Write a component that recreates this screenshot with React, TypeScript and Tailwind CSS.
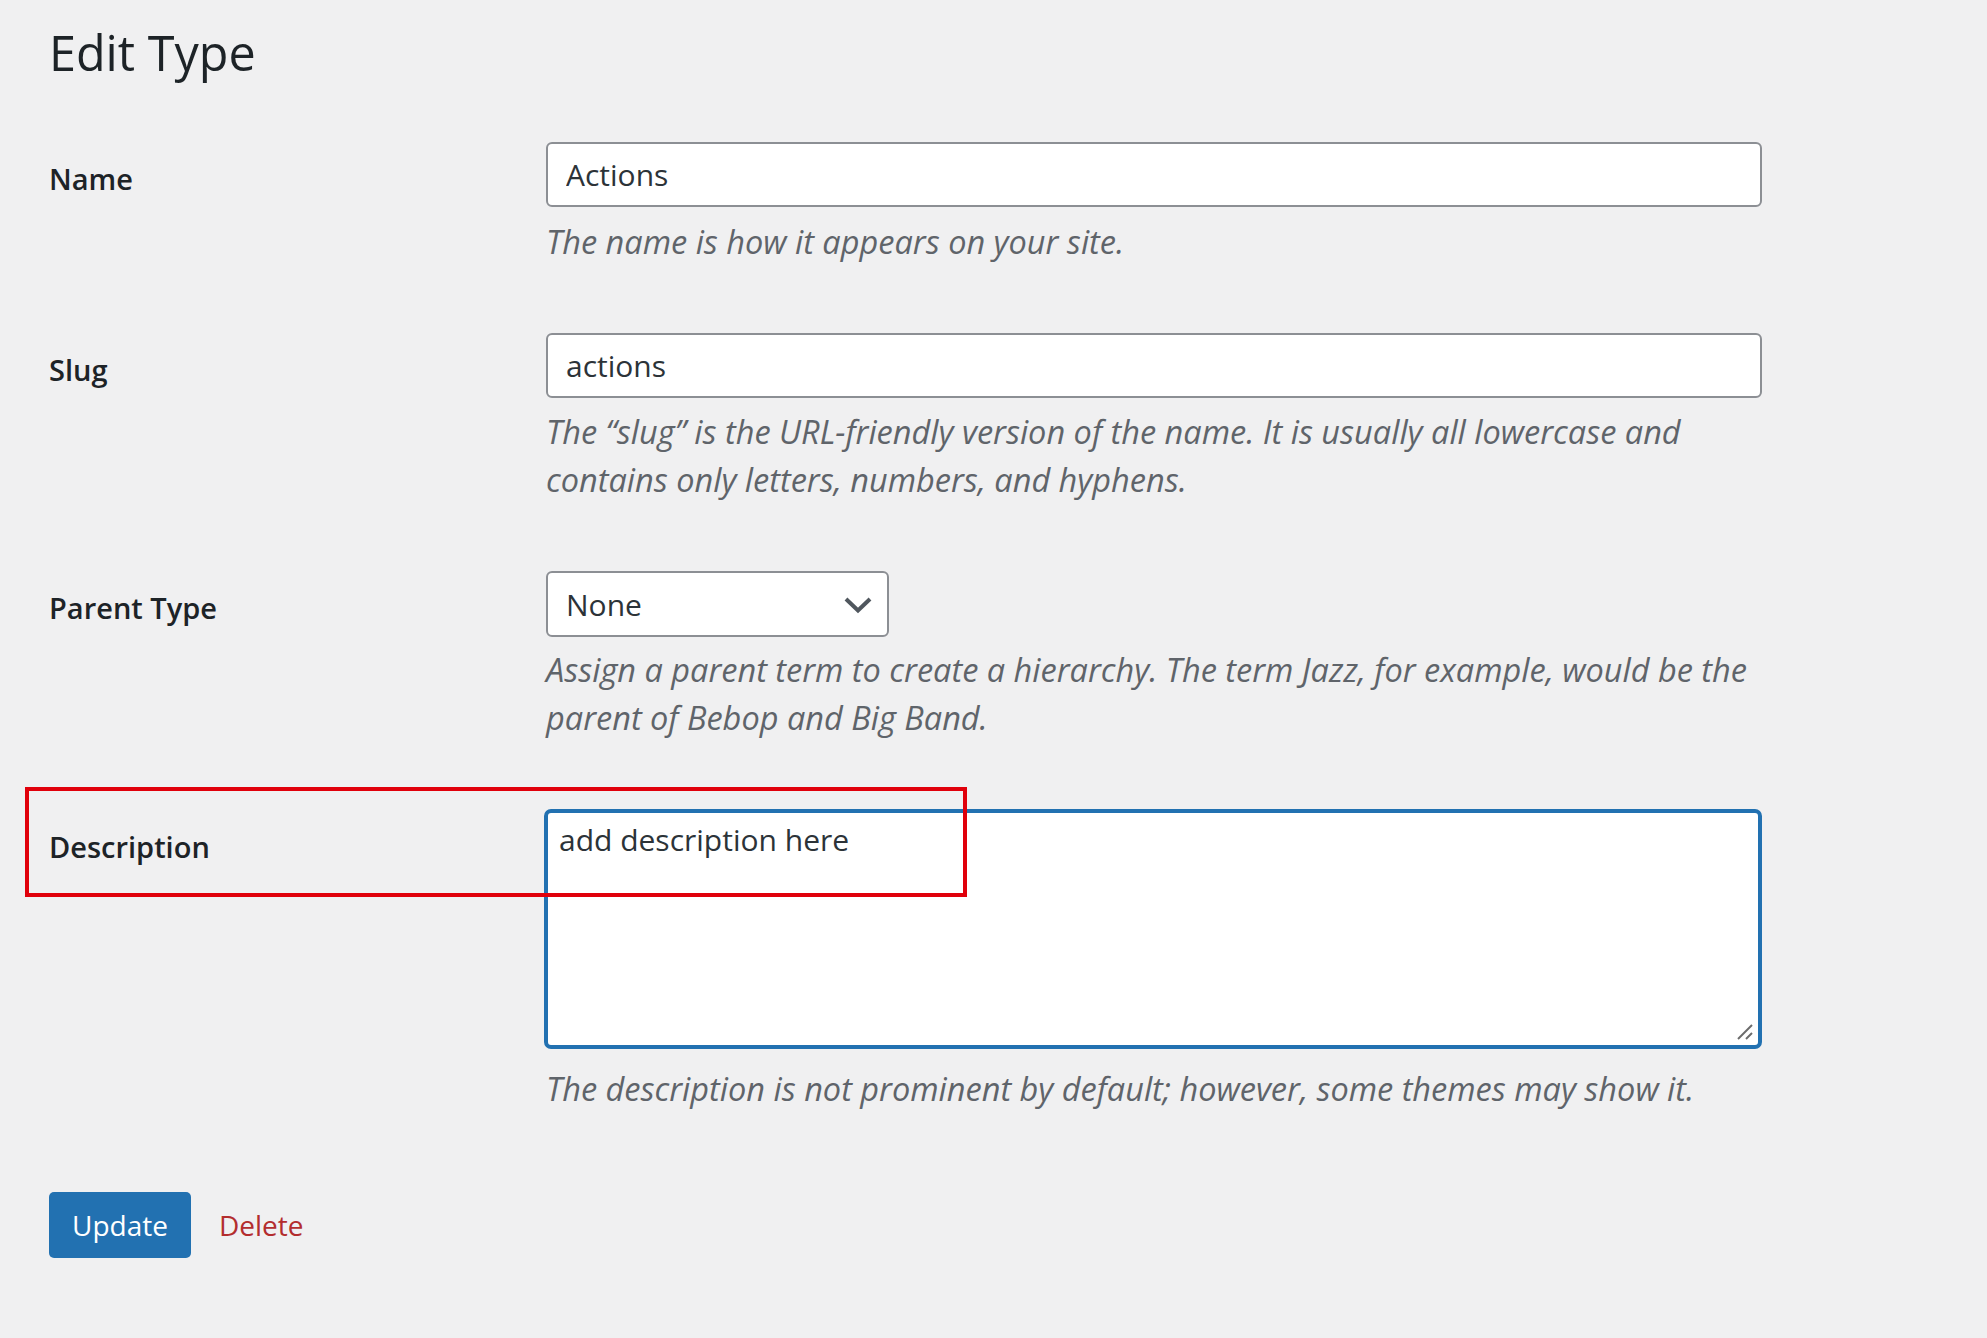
type Row = {
  label: string;
  help: string[];
};

const FONT = "font-['Open_Sans','Noto_Sans',sans-serif]";

function Label({ children }: { children: React.ReactNode }) {
  return (
    <div className="pt-[17px] text-[29px] leading-[40px] font-semibold text-[#1d2327]">
      {children}
    </div>
  );
}

function Help({ lines, className = "mt-[10px]" }: { lines: string[]; className?: string }) {
  return (
    <p className={`${className} text-[32.5px] leading-[48px] italic font-medium text-[#5f646a]`}>
      {lines.map((l, i) => (
        <span key={i}>
          {l}
          {i < lines.length - 1 && <br />}
        </span>
      ))}
    </p>
  );
}

const nameRow: Row = {
  label: "Name",
  help: ["The name is how it appears on your site."],
};

const slugRow: Row = {
  label: "Slug",
  help: [
    "The \u201cslug\u201d is the URL-friendly version of the name. It is usually all lowercase and",
    "contains only letters, numbers, and hyphens.",
  ],
};

const parentRow: Row = {
  label: "Parent Type",
  help: [
    "Assign a parent term to create a hierarchy. The term Jazz, for example, would be the",
    "parent of Bebop and Big Band.",
  ],
};

export default function App() {
  return (
    <div className={`min-h-screen w-full bg-[#f0f0f1] ${FONT} text-[#1d2327]`}>
      <div className="pl-[49px] pt-[20px] pb-[80px]">
        <h1 className="text-[48.5px] leading-[65px] font-normal text-[#1d2327]">Edit Type</h1>

        <div className="mt-[57px] flex flex-col gap-[67px]">
          {/* name */}
          <div className="grid grid-cols-[497px_1216px]">
            <Label>{nameRow.label}</Label>
            <div>
              <input
                defaultValue="Actions"
                className="block h-[65px] w-full rounded-[6px] border-2 border-[#8c8f94] bg-white px-[18px] text-[30px] text-[#2c3338] outline-none"
              />
              <Help lines={nameRow.help} className="mt-[11px]" />
            </div>
          </div>

          {/* slug */}
          <div className="grid grid-cols-[497px_1216px]">
            <Label>{slugRow.label}</Label>
            <div>
              <input
                defaultValue="actions"
                className="block h-[65px] w-full rounded-[6px] border-2 border-[#8c8f94] bg-white px-[18px] text-[30px] text-[#2c3338] outline-none"
              />
              <Help lines={slugRow.help} />
            </div>
          </div>

          {/* parent */}
          <div className="grid grid-cols-[497px_1216px]">
            <Label>{parentRow.label}</Label>
            <div>
              <div className="flex h-[66px] w-[343px] items-center justify-between rounded-[6px] border-2 border-[#8c8f94] bg-white pl-[18px] pr-[15px]">
                <span className="text-[30px] text-[#2c3338]">None</span>
                <svg width="28" height="18" viewBox="0 0 28 18" className="mt-[2px]">
                  <polyline
                    points="2,3 14,14.5 26,3"
                    fill="none"
                    stroke="#50575e"
                    strokeWidth="4"
                  />
                </svg>
              </div>
              <Help lines={parentRow.help} className="mt-[9px]" />
            </div>
          </div>

          {/* description */}
          <div className="relative grid grid-cols-[495px_1218px]">
            <Label>
              <span className="block pt-[1px]">Description</span>
            </Label>
            <div>
              <div className="relative">
                <textarea
                  defaultValue="add description here"
                  className="block h-[240px] w-full resize-none rounded-[7px] border-4 border-[#2271b1] bg-white px-[11px] pt-[7px] text-[30px] leading-[40px] text-[#2c3338] outline-none"
                />
                <svg
                  width="20"
                  height="20"
                  viewBox="0 0 20 20"
                  className="pointer-events-none absolute bottom-[7px] right-[7px]"
                >
                  <line x1="3" y1="17" x2="17" y2="3" stroke="#6b6b6b" strokeWidth="2" />
                  <line x1="11" y1="17" x2="17" y2="11" stroke="#6b6b6b" strokeWidth="2" />
                </svg>
              </div>
              <Help
                lines={["The description is not prominent by default; however, some themes may show it."]}
                className="mt-[16px] pl-[2px]"
              />
            </div>
            <div className="pointer-events-none absolute left-[-24px] top-[-22px] h-[110px] w-[942px] border-4 border-[#e0000b]" />
          </div>
        </div>

        <div className="mt-[79px] flex items-center gap-[28px]">
          <button className="h-[66px] w-[142px] rounded-[5px] bg-[#2271b1] text-[28px] text-white">
            Update
          </button>
          <a className="text-[28px] text-[#b32d2e]">Delete</a>
        </div>
      </div>
    </div>
  );
}
